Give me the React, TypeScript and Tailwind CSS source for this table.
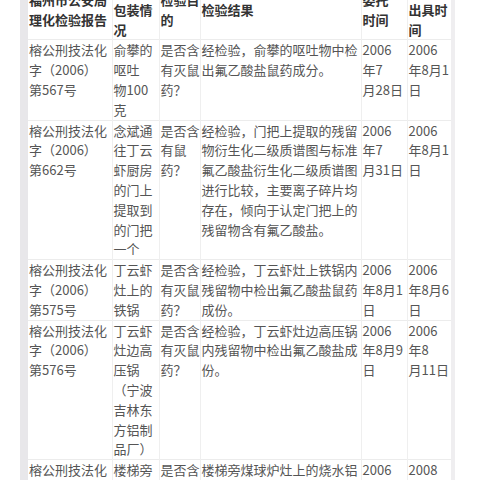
import React from 'react'

// ── Data ──────────────────────────────────────────────────────────────────────

type Cell = string[]

const HEAD: Cell[] = [
  ['福州市公安局', '理化检验报告'],
  ['检材及', '包装情', '况'],
  ['检验目', '的'],
  ['检验结果'],
  ['委托', '时间'],
  ['鉴定书', '出具时', '间'],
]

const ROWS: Cell[][] = [
  [
    ['榕公刑技法化', '字（2006）', '第567号'],
    ['俞攀的', '呕吐', '物100', '克'],
    ['是否含', '有灭鼠', '药？'],
    ['经检验，俞攀的呕吐物中检', '出氟乙酸盐鼠药成分。'],
    ['2006', '年7', '月28日'],
    ['2006', '年8月1', '日'],
  ],
  [
    ['榕公刑技法化', '字（2006）', '第662号'],
    ['念斌通', '往丁云', '虾厨房', '的门上', '提取到', '的门把', '一个'],
    ['是否含', '有鼠', '药？'],
    [
      '经检验，门把上提取的残留',
      '物衍生化二级质谱图与标准',
      '氟乙酸盐衍生化二级质谱图',
      '进行比较，主要离子碎片均',
      '存在，倾向于认定门把上的',
      '残留物含有氟乙酸盐。',
    ],
    ['2006', '年7', '月31日'],
    ['2006', '年8月1', '日'],
  ],
  [
    ['榕公刑技法化', '字（2006）', '第575号'],
    ['丁云虾', '灶上的', '铁锅'],
    ['是否含', '有灭鼠', '药？'],
    ['经检验，丁云虾灶上铁锅内', '残留物中检出氟乙酸盐鼠药', '成份。'],
    ['2006', '年8月1', '日'],
    ['2006', '年8月6', '日'],
  ],
  [
    ['榕公刑技法化', '字（2006）', '第576号'],
    ['丁云虾', '灶边高', '压锅', '（宁波', '吉林东', '方铝制', '品厂）'],
    ['是否含', '有灭鼠', '药？'],
    ['经检验，丁云虾灶边高压锅', '内残留物中检出氟乙酸盐成', '份。'],
    ['2006', '年8月9', '日'],
    ['2006', '年8', '月11日'],
  ],
  [
    ['榕公刑技法化', '字（2006）', '第577号'],
    ['楼梯旁', '煤球炉', '上的烧', '水铝壶'],
    ['是否含', '有灭鼠', '药？'],
    ['楼梯旁煤球炉灶上的烧水铝', '壶内残留物中检出氟乙酸盐', '成份。'],
    ['2006', '年8月9', '日'],
    ['2008', '年8', '月11日'],
  ],
]

const WIDTHS = ['w-[84px]', 'w-[47px]', 'w-[41px]', 'w-[161px]', 'w-[46px]', 'w-[44px]']

function Lines({ lines }: { lines: string[] }) {
  return (
    <>
      {lines.map((l, i) => (
        <div key={i} className="whitespace-nowrap">
          {l}
        </div>
      ))}
    </>
  )
}

// ── Page ──────────────────────────────────────────────────────────────────────

export default function App() {
  return (
    <div
      className="h-[480px] overflow-hidden bg-white px-5"
      style={{ fontFamily: '"Noto Sans CJK SC", "Noto Sans", sans-serif' }}
    >
      <div className="-mt-[20px] w-[435px] border-l-8 border-r-4 border-l-[#e8e7ea] border-r-[#efeef0]">
        <table className="w-[423px] table-fixed border-collapse text-[13px] leading-[19.8px]">
          <colgroup>
            {WIDTHS.map((w, i) => (
              <col key={i} className={w} />
            ))}
          </colgroup>
          <thead>
            <tr className="border-b border-[#ececec]">
              {HEAD.map((c, i) => (
                <th
                  key={i}
                  className="border-l border-[#efefef] px-px text-left align-middle font-bold text-[#333] first:border-l-0"
                >
                  <Lines lines={c} />
                </th>
              ))}
            </tr>
          </thead>
          <tbody>
            {ROWS.map((row, r) => (
              <tr key={r} className="border-b border-[#ececec]">
                {row.map((c, i) => (
                  <td
                    key={i}
                    className="border-l border-[#efefef] px-px align-top text-[#555] first:border-l-0"
                  >
                    <Lines lines={c} />
                  </td>
                ))}
              </tr>
            ))}
          </tbody>
        </table>
      </div>
    </div>
  )
}
